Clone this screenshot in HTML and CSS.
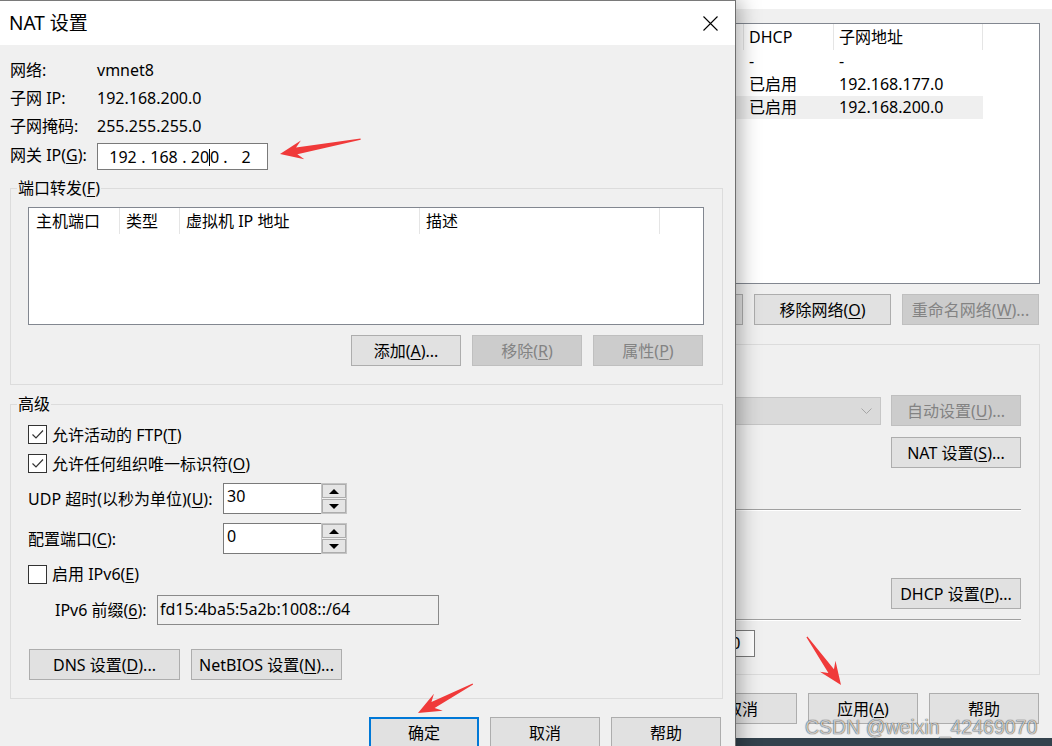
FILE: index.html
```html
<!DOCTYPE html>
<html lang="zh-CN">
<head>
<meta charset="utf-8">
<title>NAT 设置</title>
<link rel="stylesheet" href="styles.css">
</head>
<body>
<main class="desktop">

  <section class="bgwin">
    <div class="bg-top"></div>
    <div class="bg-content">
      <div class="netlist">
        <div class="nl-head">
          <span class="c0"></span><span class="c1">DHCP</span><span class="c2">子网地址</span>
        </div>
        <div class="nl-row"><span></span><span>-</span><span>-</span></div>
        <div class="nl-row"><span></span><span>已启用</span><span>192.168.177.0</span></div>
        <div class="nl-row sel"><span></span><span>已启用</span><span>192.168.200.0</span></div>
      </div>
      <div class="bg-btnrow">
        <button class="btn w137">添加网络(<u>E</u>)...</button>
        <button class="btn w137">移除网络(<u>O</u>)</button>
        <button class="btn w137 dis">重命名网络(<u>W</u>)...</button>
      </div>
      <div class="bg-group">
        <div class="bg-row r1">
          <div class="combo"><svg width="11" height="7" viewBox="0 0 11 7"><path d="M0.5 0.5 L5.5 5.5 L10.5 0.5" fill="none" stroke="#a6a6a6" stroke-width="1"/></svg></div>
          <button class="btn w130 dis">自动设置(<u>U</u>)...</button>
        </div>
        <div class="bg-row r2"><button class="btn w130">NAT 设置(<u>S</u>)...</button></div>
        <div class="sep s1"></div>
        <div class="bg-row r3"><button class="btn w130">DHCP 设置(<u>P</u>)...</button></div>
        <div class="sep s2"></div>
        <div class="bg-row r4"><div class="mask">255.255.255.0</div></div>
      </div>
      <div class="bg-btnrow bottom">
        <button class="btn w110">取消</button>
        <button class="btn w110">应用(<u>A</u>)</button>
        <button class="btn w110">帮助</button>
      </div>
    </div>
  </section>

  <section class="dialog">
    <header class="titlebar">
      <h1 class="title">NAT 设置</h1>
      <svg class="close" width="15" height="15" viewBox="0 0 15 15"><path d="M0.5 0.5 L14.5 14.5 M14.5 0.5 L0.5 14.5" stroke="#000" stroke-width="1.1" fill="none"/></svg>
    </header>
    <div class="dlg-body">
      <div class="info">
        <span>网络:</span><span>vmnet8</span>
        <span>子网 IP:</span><span>192.168.200.0</span>
        <span>子网掩码:</span><span>255.255.255.0</span>
        <span>网关 IP(<u>G</u>):</span>
        <div class="ipbox"><span class="f">192</span><span class="d">.</span><span class="f">168</span><span class="d">.</span><span class="f">20<i class="caret"></i>0</span><span class="d">.</span><span class="f">2</span></div>
      </div>

      <fieldset class="group">
        <legend>端口转发(<u>F</u>)</legend>
        <div class="gbody">
          <div class="listview">
            <div class="lv-head"><span class="h1">主机端口</span><span>类型</span><span>虚拟机 IP 地址</span><span>描述</span></div>
          </div>
          <div class="btnrow">
            <button class="btn w110">添加(<u>A</u>)...</button>
            <button class="btn w110 dis">移除(<u>R</u>)</button>
            <button class="btn w110 dis">属性(<u>P</u>)</button>
          </div>
        </div>
      </fieldset>

      <fieldset class="group adv">
        <legend>高级</legend>
        <div class="gbody">
          <div class="chkrow"><span class="chk"><svg width="17" height="17" viewBox="0 0 17 17"><path d="M3.5 8.5 L7 12 L14 4.5" fill="none" stroke="#333" stroke-width="1.2"/></svg></span><span>允许活动的 FTP(<u>T</u>)</span></div>
          <div class="chkrow"><span class="chk"><svg width="17" height="17" viewBox="0 0 17 17"><path d="M3.5 8.5 L7 12 L14 4.5" fill="none" stroke="#333" stroke-width="1.2"/></svg></span><span>允许任何组织唯一标识符(<u>O</u>)</span></div>
          <div class="fieldrow udp">
            <span class="flabel">UDP 超时(以秒为单位)(<u>U</u>):</span>
            <div class="spin"><div class="spin-val">30</div><div class="spin-btns"><span class="sb"><i class="up"></i></span><span class="sb"><i class="down"></i></span></div></div>
          </div>
          <div class="fieldrow cfg">
            <span class="flabel">配置端口(<u>C</u>):</span>
            <div class="spin"><div class="spin-val">0</div><div class="spin-btns"><span class="sb"><i class="up"></i></span><span class="sb"><i class="down"></i></span></div></div>
          </div>
          <div class="chkrow v6"><span class="chk"></span><span>启用 IPv6(<u>E</u>)</span></div>
          <div class="fieldrow prefix">
            <span class="plabel">IPv6 前缀(<u>6</u>):</span>
            <div class="prefixbox">fd15:4ba5:5a2b:1008::/64</div>
          </div>
          <div class="btnrow left">
            <button class="btn w151">DNS 设置(<u>D</u>)...</button>
            <button class="btn w151">NetBIOS 设置(<u>N</u>)...</button>
          </div>
        </div>
      </fieldset>

      <div class="dlg-btns">
        <button class="btn w110 default">确定</button>
        <button class="btn w110">取消</button>
        <button class="btn w110">帮助</button>
      </div>
    </div>
  </section>

  <svg class="arrows" width="1052" height="746" viewBox="0 0 1052 746">
    <g fill="#f03a3a">
      <polygon transform="translate(280 154) rotate(169.5)" points="0,0 -23,-9.5 -17,-3.4 -82,-0.6 -82,0.6 -17,3.4 -23,9.5"/>
      <polygon transform="translate(418 713) rotate(152.2)" points="0,0 -23,-9.5 -17,-3.4 -62,-0.6 -62,0.6 -17,3.4 -23,9.5"/>
      <polygon transform="translate(841 685) rotate(54.7)" points="0,0 -23,-9.5 -17,-3.4 -59,-0.6 -59,0.6 -17,3.4 -23,9.5"/>
    </g>
  </svg>

  <div class="watermark">CSDN @weixin_42469070</div>
</main>
</body>
</html>
```

FILE: styles.css
```css
* { box-sizing: border-box; margin: 0; padding: 0; }
html, body { width: 1052px; height: 746px; overflow: hidden; }
body {
  font-family: "Noto Sans", "Noto Sans CJK SC", sans-serif;
  font-size: 16px;
  line-height: 20px;
  color: #000;
  background: #33424d;
}
.desktop { position: relative; width: 1052px; height: 746px; overflow: hidden; }
u { text-decoration: underline; text-underline-offset: 2px; }

.btn {
  display: flex; align-items: center; justify-content: center;
  flex: none; height: 31px; padding: 0;
  border: 1px solid #adadad; background: #e1e1e1;
  font: inherit; color: #000; line-height: 20px; white-space: nowrap;
}
.btn.dis { background: #cccccc; border-color: #bfbfbf; color: #838383; }
.btn.default { border: 2px solid #0078d7; }
.w110 { width: 110px; }
.w130 { width: 130px; }
.w137 { width: 137px; }
.w151 { width: 151px; }

/* background window */
.bgwin { position: absolute; left: 620px; top: 0; width: 432px; height: 738px; background: #f0f0f0; z-index: 1; }
.bg-top { height: 9px; background: #fff; }
.bg-content { padding: 14px 12px 0 0; }
.netlist { height: 261px; border: 1px solid #828790; background: #fff; }
.nl-head, .nl-row { display: grid; grid-template-columns: 123px 90px 149px; }
.nl-head { height: 26px; }
.nl-head span { border-right: 1px solid #e5e5e5; padding-left: 5px; line-height: 26px; }
.nl-row { height: 23px; line-height: 23px; width: 362px; }
.nl-row span { padding-left: 5px; }
.nl-row.sel { background: #efefef; }
.bg-btnrow { display: flex; justify-content: flex-end; gap: 11px; margin: 10px 1px 0 0; }
.bg-btnrow.bottom { margin-top: 18px; }
.bg-group { margin-top: 19px; height: 331px; border: 1px solid #dcdcdc; padding: 50px 18px 0 14px; }
.bg-row { display: flex; justify-content: flex-end; }
.r1 { align-items: flex-start; gap: 10px; }
.combo {
  width: 200px; height: 28px; margin-top: 2px;
  background: #dadada; border: 1px solid #c6c6c6;
  display: flex; align-items: center; justify-content: flex-end; padding-right: 8px;
}
.r2 { margin-top: 11px; }
.sep { border-top: 1px solid #a0a0a0; border-bottom: 1px solid #fff; }
.s1 { margin-top: 41px; }
.r3 { margin-top: 67px; }
.s2 { margin-top: 10px; }
.r4 { margin-top: 9px; justify-content: flex-start; }
.mask { width: 120px; height: 27px; border: 1px solid #7a7a7a; background: #fff; text-align: right; padding-right: 15px; line-height: 25px; }

/* dialog */
.dialog {
  position: absolute; left: 0; top: 0; z-index: 2;
  width: 736px; height: 770px;
  background: #f0f0f0;
  border-top: 1px solid #7a7a7a;
  border-right: 1px solid #6e6e6e;
  box-shadow: 3px 0 20px rgba(0, 0, 0, 0.35);
}
.titlebar { height: 44px; background: #fff; display: flex; align-items: center; justify-content: space-between; padding: 0 17px 0 9px; }
.title { font-size: 19px; font-weight: normal; line-height: 24px; }
.close { display: block; }
.dlg-body { padding: 11px 14px 0 0; }

.info {
  display: grid; grid-template-columns: 87px auto; grid-template-rows: 28px 28px 28px 30px;
  align-items: center; justify-content: start; margin-left: 10px;
}
.ipbox {
  width: 171px; height: 27px; margin-top: 3px;
  border: 1px solid #7a7a7a; background: #fff;
  display: flex; align-items: center; padding-left: 7px;
}
.ipbox .f { width: 36px; text-align: center; }
.ipbox .d { width: 5px; text-align: center; }
.caret { display: inline-block; width: 1px; height: 17px; background: #000; vertical-align: -3px; }

.group { border: 1px solid #dcdcdc; margin: 8px 0 0 10px; width: 713px; padding: 0; min-width: 0; }
.group legend { margin-left: 6px; padding: 0 1px; line-height: 20px; }
.gbody { padding: 9px 18px 18px 17px; }
.adv { margin-top: 9px; }
.adv .gbody { padding-top: 6px; }

.listview { height: 118px; border: 1px solid #828790; background: #fff; }
.lv-head { display: grid; grid-template-columns: 91px 60px 240px 240px; height: 26px; }
.lv-head span { border-right: 1px solid #e5e5e5; padding-left: 6px; line-height: 26px; }
.lv-head .h1 { padding-left: 7px; }

.btnrow { display: flex; justify-content: flex-end; gap: 11px; margin: 10px 1px 0 0; }
.btnrow.left { justify-content: flex-start; margin: 24px 0 0 1px; }

.chkrow { display: flex; align-items: center; gap: 5px; height: 29px; }
.chkrow.v6 { height: 28px; margin-top: 6px; }
.chk { width: 19px; height: 19px; border: 1px solid #333; background: #fff; display: flex; flex: none; }
.fieldrow { display: flex; align-items: center; }
.udp { margin-top: 5px; }
.cfg { margin-top: 9px; }
.prefix { margin-top: 7px; }
.flabel { width: 195px; flex: none; }
.plabel { width: 129px; padding-left: 27px; flex: none; }
.spin { display: flex; height: 31px; }
.spin-val { width: 98px; border: 1px solid #7a7a7a; border-right: 0; background: #fff; padding-left: 3px; line-height: 25px; }
.spin-btns { width: 26px; border: 1px solid #c4c4c4; background: #f0f0f0; display: flex; flex-direction: column; gap: 1px; }
.sb { flex: 1; border: 1px solid #adadad; background: #e5e5e5; display: flex; align-items: center; justify-content: center; }
.up { width: 0; height: 0; border-left: 5px solid transparent; border-right: 5px solid transparent; border-bottom: 5px solid #000; }
.down { width: 0; height: 0; border-left: 5px solid transparent; border-right: 5px solid transparent; border-top: 5px solid #000; }
.prefixbox { width: 282px; height: 30px; border: 1px solid #8a8a8a; background: #f0f0f0; padding: 3px 0 0 2px; line-height: 20px; }

.dlg-btns { display: flex; justify-content: flex-end; gap: 11px; margin-top: 18px; }

.arrows { position: absolute; left: 0; top: 0; z-index: 5; pointer-events: none; }
.watermark {
  position: absolute; left: 805px; top: 716px; z-index: 6;
  font-family: "Liberation Sans", Arial, sans-serif; font-size: 19.5px; line-height: 22px;
  color: rgba(255, 255, 255, 0.72);
  text-shadow: 0 0 1px rgba(0, 0, 0, 0.7), 0 0 1px rgba(0, 0, 0, 0.5);
  white-space: nowrap;
}
```
